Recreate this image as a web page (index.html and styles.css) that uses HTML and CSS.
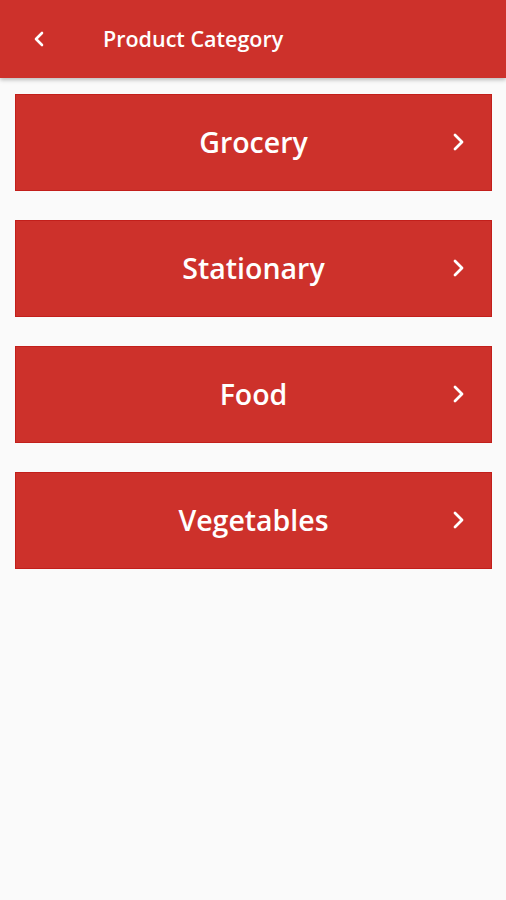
FILE: index.html
```html
<!DOCTYPE html>
<html lang="en">
<head>
  <meta charset="UTF-8">
  <title>Product Category</title>
  <link rel="stylesheet" href="styles.css">
</head>
<body>

<div class="toolbar">
  <button class="back" type="button" aria-label="Back">
    <svg width="14" height="18" viewBox="0 0 14 18"><path d="M10 3 L4 9 L10 15" fill="none" stroke="#fff" stroke-width="2.6" stroke-linecap="round" stroke-linejoin="round"/></svg>
  </button>
  <h1>Product Category</h1>
</div>

<div class="list">
  <a class="category" href="#">
    <span class="name">Grocery</span>
    <svg class="arrow" width="16" height="20" viewBox="0 0 16 20"><path d="M5 3 L12 10 L5 17" fill="none" stroke="#fff" stroke-width="2.8" stroke-linecap="round" stroke-linejoin="round"/></svg>
  </a>
  <a class="category" href="#">
    <span class="name">Stationary</span>
    <svg class="arrow" width="16" height="20" viewBox="0 0 16 20"><path d="M5 3 L12 10 L5 17" fill="none" stroke="#fff" stroke-width="2.8" stroke-linecap="round" stroke-linejoin="round"/></svg>
  </a>
  <a class="category" href="#">
    <span class="name">Food</span>
    <svg class="arrow" width="16" height="20" viewBox="0 0 16 20"><path d="M5 3 L12 10 L5 17" fill="none" stroke="#fff" stroke-width="2.8" stroke-linecap="round" stroke-linejoin="round"/></svg>
  </a>
  <a class="category" href="#">
    <span class="name">Vegetables</span>
    <svg class="arrow" width="16" height="20" viewBox="0 0 16 20"><path d="M5 3 L12 10 L5 17" fill="none" stroke="#fff" stroke-width="2.8" stroke-linecap="round" stroke-linejoin="round"/></svg>
  </a>
</div>

</body>
</html>
```

FILE: styles.css
```css
body {
  margin: 0;
  background-color: #fafafa;
  font-family: "Open Sans", Lato, sans-serif;
  height: 900px;
}
.toolbar {
  height: 78px;
  background-color: #cd312b;
  display: flex;
  align-items: center;
  box-shadow: 0 2px 4px rgba(0, 0, 0, 0.25);
}
.back {
  background: none;
  border: none;
  padding: 0;
  margin-left: 32px;
  width: 16px;
  height: 18px;
  display: flex;
  align-items: center;
  cursor: pointer;
}
.toolbar h1 {
  margin: 0 0 0 55px;
  color: #fff;
  font-size: 21.5px;
  font-weight: 600;
  padding-bottom: 2px;
}
.list {
  padding: 16px 14px 0 15px;
  display: flex;
  flex-direction: column;
  gap: 29px;
}
.category {
  height: 95px;
  background-color: #cd312b;
  border: 1px solid #c21f1b;
  display: flex;
  align-items: center;
  justify-content: center;
  position: relative;
  text-decoration: none;
}
.name {
  color: #fff;
  font-size: 28.5px;
  font-weight: 600;
  padding-bottom: 2px;
}
.arrow {
  position: absolute;
  right: 25px;
  top: 37px;
}
```
